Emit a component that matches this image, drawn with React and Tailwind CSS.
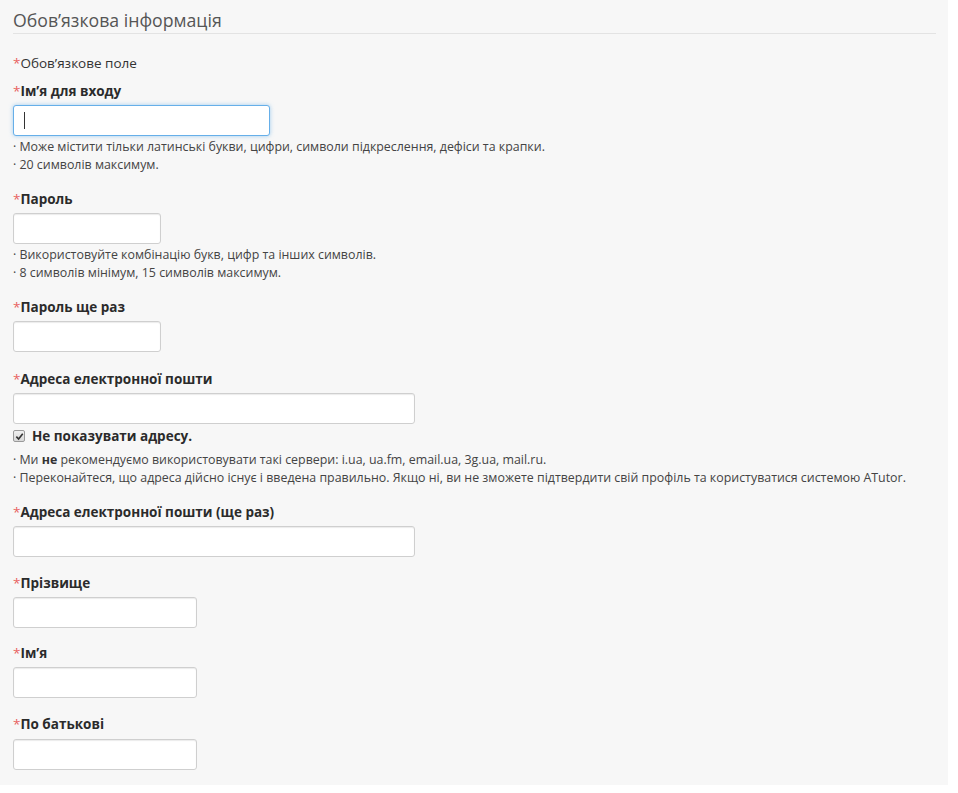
import React from "react";

const Label = ({ children, className = "" }) => (
  <div className={"h-[18px] leading-[18px] text-[13.5px] font-bold text-[#2b2b2b] " + className}>
    <span className="text-[#e8625f] font-normal">*</span>
    {children}
  </div>
);

const Input = ({ width, className = "", focused = false }) => (
  <div className={"relative mt-[5px] " + className}>
    <input
      type="text"
      className={
        "block h-[31px] rounded-[3px] bg-white px-2 outline-none " +
        (focused
          ? "border border-[#66afe9] shadow-[0_0_4px_rgba(102,175,233,0.6)]"
          : "border border-[#cfcfcf] shadow-[inset_0_1px_1px_rgba(0,0,0,0.08)]")
      }
      style={{ width }}
    />
    {focused && <span className="absolute left-[11px] top-[7px] h-[17px] w-px bg-[#333]" />}
  </div>
);

const Hints = ({ children }) => (
  <div className="mt-[2px] text-[12.4px] leading-[18px] text-[#444]">{children}</div>
);

export default function App() {
  return (
    <div className="w-[958px] h-[793px] bg-white font-['Open_Sans',sans-serif]">
      <div className="w-[948px] h-[785px] bg-[#f7f7f7] pl-[13px] pr-[12px] pt-[8px]">
        <h2 className="h-[26px] text-[17.7px] leading-[24px] font-normal text-[#555] border-b border-[#e3e3e3]">
          Обов’язкова інформація
        </h2>

        <div className="mt-[20px] h-[18px] leading-[18px] text-[13.5px] text-[#333]">
          <span className="text-[#e8625f]">*</span>Обов’язкове поле
        </div>

        <Label className="mt-[10px]">Ім’я для входу</Label>
        <Input width={257} focused />
        <Hints>
          <div>· Може містити тільки латинські букви, цифри, символи підкреслення, дефіси та крапки.</div>
          <div>· 20 символів максимум.</div>
        </Hints>

        <Label className="mt-[16px]">Пароль</Label>
        <Input width={148} />
        <Hints>
          <div>· Використовуйте комбінацію букв, цифр та інших символів.</div>
          <div>· 8 символів мінімум, 15 символів максимум.</div>
        </Hints>

        <Label className="mt-[16px]">Пароль ще раз</Label>
        <Input width={148} />

        <Label className="mt-[18px]">Адреса електронної пошти</Label>
        <Input width={402} />
        <div className="mt-[3px] flex items-center h-[18px]">
          <span className="flex h-[12px] w-[12px] items-center justify-center rounded-[2px] border border-[#9a9a9a] bg-gradient-to-b from-[#f0f0f0] to-[#d8d8d8]">
            <svg viewBox="0 0 10 10" className="h-[9px] w-[9px]">
              <path d="M1.5 5.2 L4 7.8 L8.6 2" fill="none" stroke="#333" strokeWidth="1.8" />
            </svg>
          </span>
          <span className="ml-[7px] text-[13.5px] font-bold text-[#2b2b2b]">Не показувати адресу.</span>
        </div>
        <Hints>
          <div className="mt-[6px]">
            · Ми <b className="text-[#333]">не</b> рекомендуємо використовувати такі сервери: i.ua, ua.fm, email.ua, 3g.ua, mail.ru.
          </div>
          <div>
            · Переконайтеся, що адреса дійсно існує і введена правильно. Якщо ні, ви не зможете підтвердити свій профіль та користуватися системою ATutor.
          </div>
        </Hints>

        <Label className="mt-[16px]">Адреса електронної пошти (ще раз)</Label>
        <Input width={402} />

        <Label className="mt-[17px]">Прізвище</Label>
        <Input width={184} />

        <Label className="mt-[16px]">Ім’я</Label>
        <Input width={184} />

        <Label className="mt-[17px]">По батькові</Label>
        <Input width={184} className="mt-[6px]" />
      </div>
    </div>
  );
}
